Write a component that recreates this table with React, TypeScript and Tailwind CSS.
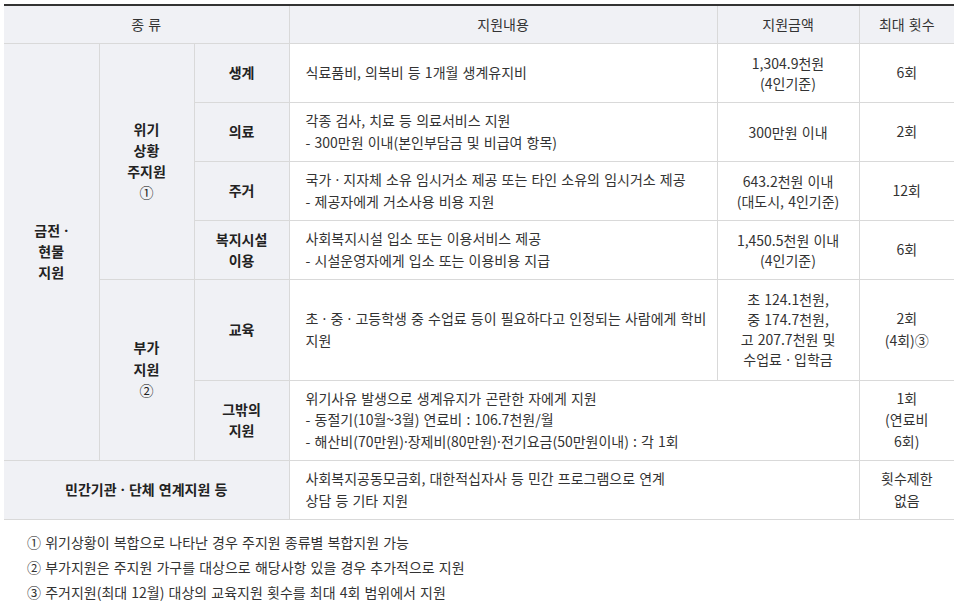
import React from "react";

const td = "border border-[#d9d9d9] align-middle";
const label = `${td} bg-[#f0f1f5] text-center font-bold text-[#222]`;
const desc = `${td} bg-white text-left pl-[16px] pr-[4px] text-[#333] leading-[21.5px]`;
const amt = `${td} bg-white text-center text-[#333] leading-[20px]`;
const cnt = `${td} bg-white text-center text-[#333] leading-[21.5px] border-r-0`;

function D() {
  return <span style={{ fontFamily: '"Noto Sans", sans-serif' }}>·</span>;
}

export default function App() {
  return (
    <div
      className="w-[958px] h-[604px] bg-white text-[14px] text-[#333] px-[4px] pt-[4px] [word-spacing:1px]"
      style={{ fontFamily: '"Noto Sans CJK KR", "Noto Sans", sans-serif' }}
    >
      <table className="w-[950px] table-fixed border-collapse border-t-2 border-t-[#333]">
        <colgroup>
          <col className="w-[95px]" />
          <col className="w-[95px]" />
          <col className="w-[95px]" />
          <col className="w-[428px]" />
          <col className="w-[142px]" />
          <col className="w-[95px]" />
        </colgroup>
        <thead>
          <tr className="h-[38px] bg-[#f0f1f5]">
            <th colSpan={3} className={`${td} border-l-0 border-t-0 font-normal text-center`}>종 류</th>
            <th className={`${td} border-t-0 font-normal text-center`}>지원내용</th>
            <th className={`${td} border-t-0 font-normal text-center`}>지원금액</th>
            <th className={`${td} border-t-0 border-r-0 font-normal text-center`}>최대 횟수</th>
          </tr>
        </thead>
        <tbody>
          <tr className="h-[59px]">
            <td rowSpan={6} className={`${label} border-l-0 leading-[21px]`}>
              금전 <D /><br />현물<br />지원
            </td>
            <td rowSpan={4} className={`${label} leading-[21px]`}>
              위기<br />상황<br />주지원<br /><span className="font-normal">①</span>
            </td>
            <td className={label}>생계</td>
            <td className={desc}>식료품비, 의복비 등 1개월 생계유지비</td>
            <td className={amt}>1,304.9천원<br />(4인기준)</td>
            <td className={cnt}>6회</td>
          </tr>
          <tr className="h-[59px]">
            <td className={label}>의료</td>
            <td className={desc}>
              각종 검사, 치료 등 의료서비스 지원<br />- 300만원 이내(본인부담금 및 비급여 항목)
            </td>
            <td className={amt}>300만원 이내</td>
            <td className={cnt}>2회</td>
          </tr>
          <tr className="h-[59px]">
            <td className={label}>주거</td>
            <td className={desc}>
              <span className="whitespace-nowrap">국가 <D /> 지자체 소유 임시거소 제공 또는 타인 소유의 임시거소 제공</span><br />- 제공자에게 거소사용 비용 지원
            </td>
            <td className={amt}>643.2천원 이내<br />(대도시, 4인기준)</td>
            <td className={cnt}>12회</td>
          </tr>
          <tr className="h-[59px]">
            <td className={`${label} leading-[21px]`}>복지시설<br />이용</td>
            <td className={desc}>
              사회복지시설 입소 또는 이용서비스 제공<br />- 시설운영자에게 입소 또는 이용비용 지급
            </td>
            <td className={amt}>1,450.5천원 이내<br />(4인기준)</td>
            <td className={cnt}>6회</td>
          </tr>
          <tr className="h-[101px]">
            <td rowSpan={2} className={`${label} leading-[21.5px]`}>
              부가<br />지원<br /><span className="font-normal">②</span>
            </td>
            <td className={label}>교육</td>
            <td className={desc}>
              <span className="whitespace-nowrap">초 <D /> 중 <D /> 고등학생 중 수업료 등이 필요하다고 인정되는 사람에게 학비</span><br />지원
            </td>
            <td className={amt}>
              초 124.1천원,<br />중 174.7천원,<br />고 207.7천원 및<br />수업료 <D /> 입학금
            </td>
            <td className={cnt}>2회<br />(4회)③</td>
          </tr>
          <tr className="h-[80px]">
            <td className={`${label} leading-[21px]`}>그밖의<br />지원</td>
            <td colSpan={2} className={desc}>
              위기사유 발생으로 생계유지가 곤란한 자에게 지원<br />- 동절기(10월~3월) 연료비 : 106.7천원/월<br />- 해산비(70만원)<D />장제비(80만원)<D />전기요금(50만원이내) : 각 1회
            </td>
            <td className={cnt}>1회<br />(연료비<br />6회)</td>
          </tr>
          <tr className="h-[59px]">
            <td colSpan={3} className={`${label} border-l-0`}>민간기관 <D /> 단체 연계지원 등</td>
            <td colSpan={2} className={desc}>
              사회복지공동모금회, 대한적십자사 등 민간 프로그램으로 연계<br />상담 등 기타 지원
            </td>
            <td className={cnt}>횟수제한<br />없음</td>
          </tr>
        </tbody>
      </table>
      <div className="mt-[10px] pl-[23px] leading-[25px] text-[#333]">
        <p>① 위기상황이 복합으로 나타난 경우 주지원 종류별 복합지원 가능</p>
        <p>② 부가지원은 주지원 가구를 대상으로 해당사항 있을 경우 추가적으로 지원</p>
        <p>③ 주거지원(최대 12월) 대상의 교육지원 횟수를 최대 4회 범위에서 지원</p>
      </div>
    </div>
  );
}
